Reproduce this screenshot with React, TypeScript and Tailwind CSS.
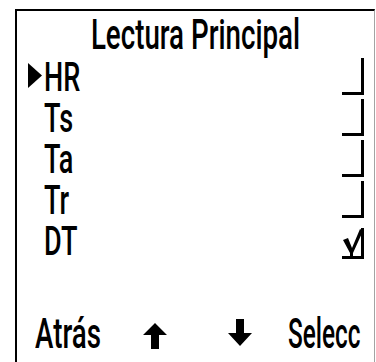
const rows = [
  { label: "HR", checked: false, selected: true },
  { label: "Ts", checked: false, selected: false },
  { label: "Ta", checked: false, selected: false },
  { label: "Tr", checked: false, selected: false },
  { label: "DT", checked: true, selected: false },
];

function Box({ checked }: { checked: boolean }) {
  return (
    <svg width="24" height="37" viewBox="0 0 24 37" className="block">
      <rect x="19" y={checked ? 6 : 0} width="3" height={checked ? 31 : 37} fill="#000" />
      <rect x="0" y="34" width="22" height="3" fill="#000" />
      {checked ? (
        <path d="M1 18 L6 16 L10 26 L18 7 L21 9 L11 31 L8 31 Z" fill="#000" />
      ) : null}
      {checked ? <rect x="8" y="28" width="3" height="7" fill="#000" /> : null}
    </svg>
  );
}

function UpArrow() {
  return (
    <svg width="24" height="26" viewBox="0 0 24 26" className="block">
      <path d="M12 0 L24 12 L16 12 L16 26 L8 26 L8 12 L0 12 Z" fill="#000" />
    </svg>
  );
}

function DownArrow() {
  return (
    <svg width="24" height="27" viewBox="0 0 24 27" className="block">
      <path d="M8 0 L16 0 L16 14 L24 14 L12 27 L0 14 L8 14 Z" fill="#000" />
    </svg>
  );
}

export default function App() {
  return (
    <div className="w-[376px] h-[362px] bg-white overflow-hidden font-['Roboto','Liberation_Sans',sans-serif] font-medium text-black">
      <div className="ml-[15px] mt-[9px] w-[360px] h-[353px] border-l-2 border-t-2 border-r border-l-black border-t-black border-r-[#a3a3a3]">
        <div className="mt-[3px] h-[42px] flex justify-center text-[42px] leading-[42px]">
          <span className="inline-block scale-x-[0.66] origin-center whitespace-nowrap">
            Lectura Principal
          </span>
        </div>
        <div className="mt-[1px]">
          {rows.map((r) => (
            <div key={r.label} className="h-[41px] flex items-start">
              <div className="w-[27px] shrink-0 flex justify-end pr-[2px] pt-[6px]">
                {r.selected ? (
                  <svg width="14" height="25" viewBox="0 0 14 25" className="block">
                    <path d="M0 0 L14 12.5 L0 25 Z" fill="#000" />
                  </svg>
                ) : null}
              </div>
              <div className="flex-1 h-[41px] text-[41px] leading-[41px]">
                <span className="inline-block scale-x-[0.66] origin-left whitespace-nowrap">
                  {r.label}
                </span>
              </div>
              <div className="pr-[8px] pt-[1px]">
                <Box checked={r.checked} />
              </div>
            </div>
          ))}
        </div>
        <div className="mt-[51px] h-[42px] flex items-start text-[42px] leading-[42px]">
          <div className="w-[126px] shrink-0 pl-[18px]">
            <span className="inline-block scale-x-[0.66] origin-left whitespace-nowrap">Atrás</span>
          </div>
          <div className="pt-[10px] w-[85px] shrink-0">
            <UpArrow />
          </div>
          <div className="pt-[6px] w-[60px] shrink-0">
            <DownArrow />
          </div>
          <div className="flex-1 min-w-0">
            <span className="inline-block scale-x-[0.58] origin-left whitespace-nowrap">Selecc</span>
          </div>
        </div>
      </div>
    </div>
  );
}
